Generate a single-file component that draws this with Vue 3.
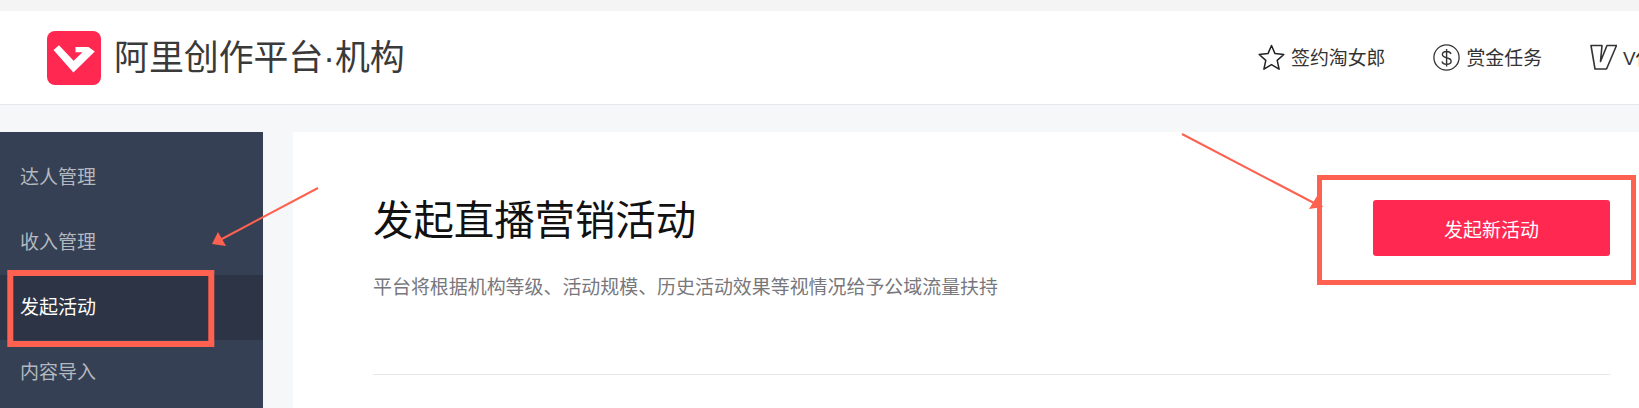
<script setup>
const navItems = [
  { key: 'star', label: '签约淘女郎' },
  { key: 'coin', label: '赏金任务' },
  { key: 'vtask', label: 'V任务' }
]

const menu = [
  { label: '达人管理', active: false },
  { label: '收入管理', active: false },
  { label: '发起活动', active: true },
  { label: '内容导入', active: false }
]
</script>

<template>
  <div class="page">
    <header class="topbar">
      <div class="brand">
        <svg class="logo" viewBox="0 0 54 54">
          <rect width="54" height="54" rx="8" fill="#ff2851" />
          <path d="M6.5 19 L12 14.2 L26.6 29.8 L35.5 21.2 L28.5 21.2 L28.5 16 L41.5 16 L47.8 20.5 L26.4 41.4 Z" fill="#fff" />
        </svg>
        <span class="brand-name">阿里创作平台·机构</span>
      </div>
      <nav class="nav">
        <a v-for="item in navItems" :key="item.key" class="nav-item">
          <svg v-if="item.key === 'star'" class="nav-icon" viewBox="0 0 27 27">
            <path d="M13.5 1.5 L17 9.6 L25.8 10.5 L19.2 16.4 L21.1 25.2 L13.5 20.6 L5.9 25.2 L7.8 16.4 L1.2 10.5 L10 9.6 Z" fill="none" stroke="#222" stroke-width="1.5" stroke-linejoin="round" />
          </svg>
          <svg v-else-if="item.key === 'coin'" class="nav-icon" viewBox="0 0 27 27">
            <circle cx="13.5" cy="13.5" r="12.6" fill="none" stroke="#333" stroke-width="1.3" />
            <path d="M18 10 C17.5 8.2 15.8 7.5 13.6 7.5 C11.2 7.5 9.4 8.7 9.4 10.6 C9.4 12.7 11.4 13.3 13.6 13.8 C15.8 14.3 18.1 15 18.1 17.2 C18.1 19.2 16.1 20.3 13.6 20.3 C11.2 20.3 9.5 19.3 9 17.5 M13.6 5 L13.6 22.6" fill="none" stroke="#333" stroke-width="1.4" />
          </svg>
          <svg v-else class="nav-icon" viewBox="0 0 27 27">
            <path d="M1 1.5 L12 1.5 L10.5 17.5 L17 1.5 L26.5 1.5 L16.5 25 L5 25 Z" fill="none" stroke="#333" stroke-width="1.6" stroke-linejoin="round" />
          </svg>
          <span class="nav-label">{{ item.label }}</span>
        </a>
      </nav>
    </header>

    <div class="layout">
      <aside class="sidebar">
        <div v-for="item in menu" :key="item.label" class="menu-item" :class="{ active: item.active }">
          {{ item.label }}
        </div>
      </aside>
      <main class="card">
        <div class="card-head">
          <div class="intro">
            <h1>发起直播营销活动</h1>
            <p>平台将根据机构等级、活动规模、历史活动效果等视情况给予公域流量扶持</p>
          </div>
          <button class="primary">发起新活动</button>
        </div>
        <div class="divider"></div>
      </main>
    </div>

    <!-- annotations drawn on top of the screenshot -->
    <svg class="marks" width="1639" height="408" viewBox="0 0 1639 408">
      <rect x="10.3" y="273" width="201" height="71" fill="none" stroke="#ff6150" stroke-width="6" />
      <rect x="1319.5" y="177.5" width="314" height="105" fill="none" stroke="#ff6150" stroke-width="5" />
      <path d="M318 188 L220 240" stroke="#ff6150" stroke-width="2" />
      <path d="M212 244 L218 232 L226 246 Z" fill="#ff6150" />
      <path d="M1182 134 L1314 203" stroke="#ff6150" stroke-width="2" />
      <path d="M1309 209 L1323 207 L1317 196 Z" fill="#ff6150" />
    </svg>
  </div>
</template>

<style scoped>
.page {
  position: relative;
  width: 1639px;
  height: 408px;
  overflow: hidden;
  padding-top: 11px;
  box-sizing: border-box;
  background: #f6f7f9;
  font-family: "Liberation Sans", "Noto Sans CJK SC", sans-serif;
}

.page::before {
  content: "";
  position: absolute;
  left: 0;
  right: 0;
  top: 0;
  height: 11px;
  background: #f4f4f4;
}

.topbar {
  height: 94px;
  box-sizing: border-box;
  background: #fff;
  border-bottom: 1px solid #e6e7ec;
  display: flex;
  align-items: center;
  padding-left: 47px;
  white-space: nowrap;
}

.brand {
  display: flex;
  align-items: center;
  gap: 13px;
}

.logo {
  width: 54px;
  height: 54px;
}

.brand-name {
  font-size: 34.9px;
  padding-bottom: 5px;
  color: #3a3a3a;
}

.nav {
  margin-left: auto;
  display: flex;
  flex: none;
  width: 381px;
  gap: 48px;
}

.nav-item {
  display: flex;
  flex: none;
  align-items: center;
  gap: 6px;
  font-size: 18.9px;
  color: #333;
}

.nav-label {
  padding-bottom: 2px;
}

.nav-icon {
  width: 27px;
  height: 27px;
  flex: none;
}

.layout {
  display: flex;
  gap: 30px;
  margin-top: 27px;
}

.sidebar {
  width: 263px;
  height: 276px;
  flex: none;
  background: #354054;
  padding-top: 13px;
  box-sizing: border-box;
}

.menu-item {
  height: 65px;
  line-height: 65px;
  padding-left: 20px;
  font-size: 19px;
  color: #b4b8bf;
}

.menu-item.active {
  background: #2c3445;
  color: #fff;
}

.card {
  flex: 1;
  height: 276px;
  background: #fff;
  padding: 0 29px 0 80px;
}

.card-head {
  display: flex;
  justify-content: space-between;
  height: 242px;
}

.intro h1 {
  margin: 65px 0 0;
  font-size: 40.4px;
  line-height: 48px;
  font-weight: 400;
  color: #111;
}

.intro p {
  margin: 28px 0 0;
  font-size: 18.94px;
  line-height: 30px;
  color: #77777c;
}

.primary {
  width: 237px;
  height: 56px;
  margin-top: 68px;
  border: 0;
  border-radius: 3px;
  background: #ff2851;
  color: #fff;
  font-family: inherit;
  font-size: 19px;
}

.divider {
  height: 1px;
  background: #e8e8e8;
}

.marks {
  position: absolute;
  left: 0;
  top: 0;
  pointer-events: none;
}
</style>
